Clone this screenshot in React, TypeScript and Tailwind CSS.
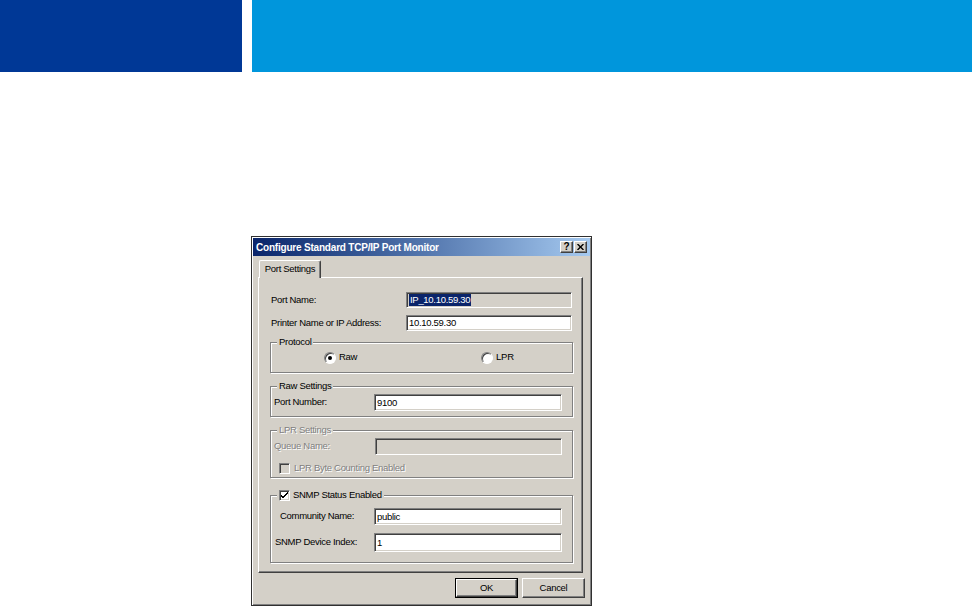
import React from "react";

const sunken =
  "border border-t-[#808080] border-l-[#808080] border-b-white border-r-white shadow-[inset_1px_1px_0_#404040,inset_-1px_-1px_0_#d4d0c8]";
const raised =
  "border border-t-white border-l-white border-b-[#404040] border-r-[#404040] shadow-[inset_-1px_-1px_0_#808080]";
const etched =
  "border border-[#808080] shadow-[1px_1px_0_#fff,inset_1px_1px_0_#fff]";
const disabledText = "text-[#808080] [text-shadow:1px_1px_0_#fff]";

function Field(props: { value?: string; w: number; h: number; grey?: boolean; selected?: boolean }) {
  const { value, w, h, grey, selected } = props;
  return (
    <div
      className={`${sunken} flex items-center pl-[2px] ${grey ? "bg-[#d4d0c8]" : "bg-white"}`}
      style={{ width: w, height: h }}
    >
      {value && (
        <span className={selected ? "bg-[#0a246a] px-[1px] leading-[12px] text-white" : "leading-[12px]"}>
          {value}
        </span>
      )}
    </div>
  );
}

function Radio(props: { checked?: boolean }) {
  return (
    <div className="flex h-[12px] w-[12px] items-center justify-center rounded-full border border-t-[#808080] border-l-[#808080] border-b-white border-r-white bg-white shadow-[inset_1px_1px_0_#404040]">
      {props.checked && <div className="h-[4px] w-[4px] rounded-full bg-black" />}
    </div>
  );
}

function Checkbox(props: { checked?: boolean; disabled?: boolean }) {
  return (
    <div
      className={`${sunken} flex h-[11px] w-[11px] items-center justify-center ${
        props.disabled ? "bg-[#d4d0c8]" : "bg-white"
      }`}
    >
      {props.checked && (
        <svg width="7" height="7" viewBox="0 0 7 7">
          <path d="M0 3 L2 5 L7 0 M0 4 L2 6 L7 1" stroke="#000" strokeWidth="1" fill="none" />
        </svg>
      )}
    </div>
  );
}

function Group(props: { title: React.ReactNode; h: number; mt: string; children?: React.ReactNode }) {
  return (
    <div className={`relative ${etched} ${props.mt}`} style={{ height: props.h }}>
      <div className="absolute -top-[7px] left-[6px] bg-[#d4d0c8] px-[2px] leading-[12px]">
        {props.title}
      </div>
      {props.children}
    </div>
  );
}

function Button(props: { label: string; isDefault?: boolean }) {
  return (
    <div className={`h-[20px] w-[63px] ${props.isDefault ? "border border-black" : ""}`}>
      <div className={`${raised} flex h-full w-full items-center justify-center bg-[#d4d0c8]`}>
        {props.label}
      </div>
    </div>
  );
}

export default function App() {
  return (
    <div className="h-[606px] w-[972px] overflow-hidden whitespace-nowrap bg-white font-['Liberation_Sans',Arial,sans-serif] text-[9.5px] tracking-[-0.3px] text-black">
      <div className="flex h-[72px] gap-[10px]">
        <div className="w-[242px] bg-[#003896]" />
        <div className="flex-1 bg-[#0096dc]" />
      </div>

      <div className="ml-[251px] mt-[164px] flex h-[370px] w-[341px] flex-col border border-[#303030] bg-[#d4d0c8] p-[1px] shadow-[inset_1px_1px_0_#fff,inset_-1px_-1px_0_#808080]">
        {/* title bar */}
        <div className="flex h-[18px] items-center justify-between bg-gradient-to-r from-[#0a246a] to-[#a6caf0] pl-[3px] pr-[3px]">
          <span className="text-[10px] font-bold tracking-[-0.2px] text-white">Configure Standard TCP/IP Port Monitor</span>
          <div className="flex gap-[1px]">
            <div className={`${raised} flex h-[12px] w-[13px] items-center justify-center bg-[#d4d0c8] text-[10px] font-bold leading-none`}>
              ?
            </div>
            <div className={`${raised} flex h-[12px] w-[13px] items-center justify-center bg-[#d4d0c8]`}>
              <svg width="7" height="6" viewBox="0 0 7 6">
                <path d="M0.5 0 L6.5 6 M6.5 0 L0.5 6" stroke="#000" strokeWidth="1.4" />
              </svg>
            </div>
          </div>
        </div>

        {/* tab */}
        <div className="ml-[6px] mt-[4px] flex">
          <div className="relative z-10 -mb-px flex h-[18px] w-[62px] items-center justify-center rounded-t-[2px] border border-b-0 border-t-white border-l-white border-r-[#404040] bg-[#d4d0c8] shadow-[inset_-1px_0_0_#808080]">
            Port Settings
          </div>
        </div>

        {/* panel */}
        <div className={`ml-[5px] h-[296px] w-[325px] ${raised} bg-[#d4d0c8] pl-[11px] pr-[9px]`}>
          <div className="mt-[14px] flex h-[16px] items-center">
            <span className="w-[136px] pl-[1px]">Port Name:</span>
            <Field value="IP_10.10.59.30" w={166} h={16} grey selected />
          </div>
          <div className="mt-[7px] flex h-[16px] items-center">
            <span className="w-[136px] pl-[1px]">Printer Name or IP Address:</span>
            <Field value="10.10.59.30" w={166} h={16} />
          </div>

          <Group title="Protocol" h={31} mt="mt-[11px]">
            <div className="flex h-full items-center">
              <div className="ml-[53px] flex items-center gap-[3px]">
                <Radio checked />
                <span>Raw</span>
              </div>
              <div className="ml-[124px] flex items-center gap-[3px]">
                <Radio />
                <span>LPR</span>
              </div>
            </div>
          </Group>

          <Group title="Raw Settings" h={31} mt="mt-[13px]">
            <div className="mt-[7px] flex h-[17px] items-center">
              <span className="w-[103px] pl-[3px]">Port Number:</span>
              <Field value="9100" w={188} h={17} />
            </div>
          </Group>

          <Group title={<span className={disabledText}>LPR Settings</span>} h={48} mt="mt-[13px]">
            <div className="mt-[7px] flex h-[17px] items-center">
              <span className={`w-[104px] pl-[3px] ${disabledText}`}>Queue Name:</span>
              <Field w={187} h={17} grey />
            </div>
            <div className="mt-[6px] flex items-center gap-[4px] pl-[8px]">
              <Checkbox disabled />
              <span className={disabledText}>LPR Byte Counting Enabled</span>
            </div>
          </Group>

          <Group
            title={
              <span className="flex items-center gap-[3px]">
                <Checkbox checked />
                <span>SNMP Status Enabled</span>
              </span>
            }
            h={68}
            mt="mt-[17px]"
          >
            <div className="mt-[12px] flex h-[17px] items-center">
              <span className="w-[103px] pl-[9px]">Community Name:</span>
              <Field value="public" w={188} h={17} />
            </div>
            <div className="mt-[8px] flex h-[19px] items-center">
              <span className="w-[103px] pl-[4px]">SNMP Device Index:</span>
              <Field value="1" w={188} h={19} />
            </div>
          </Group>
        </div>

        {/* buttons */}
        <div className="mt-[5px] flex justify-end gap-[4px] pr-[5px]">
          <Button label="OK" isDefault />
          <Button label="Cancel" />
        </div>
      </div>
    </div>
  );
}
